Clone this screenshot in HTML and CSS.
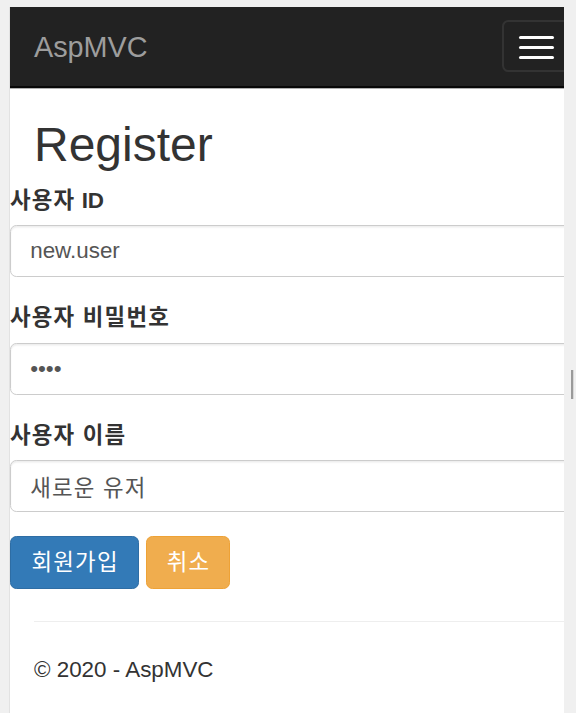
FILE: index.html
```html
<!DOCTYPE html>
<html lang="ko">
<head>
<meta charset="utf-8">
<title>Register - AspMVC</title>
<link rel="stylesheet" href="styles.css">
</head>
<body>
<div class="frame">
  <div class="page">
    <nav class="navbar">
      <a class="brand">AspMVC</a>
      <button class="toggle" type="button" aria-label="Toggle navigation">
        <span class="bar"></span>
        <span class="bar"></span>
        <span class="bar"></span>
      </button>
    </nav>
    <div class="container">
      <h2 class="title">Register</h2>
    </div>
    <form class="form">
      <div class="form-group">
        <label class="label" for="uid"><span class="ko">사용자</span> ID</label>
        <input class="form-control" id="uid" type="text" value="new.user">
      </div>
      <div class="form-group">
        <label class="label ko" for="upw">사용자 비밀번호</label>
        <input class="form-control" id="upw" type="password" value="1234">
      </div>
      <div class="form-group">
        <label class="label ko" for="uname">사용자 이름</label>
        <input class="form-control ko" id="uname" type="text" value="새로운 유저">
      </div>
      <div class="actions">
        <button class="btn btn-primary ko" type="button">회원가입</button>
        <button class="btn btn-warning ko" type="button">취소</button>
      </div>
    </form>
    <div class="container">
      <hr class="rule">
      <footer class="footer">
        <p class="copy">© 2020 - AspMVC</p>
      </footer>
    </div>
  </div>
</div>
<div class="side">
  <div class="grip"></div>
</div>
</body>
</html>
```
FILE: styles.css
```css
* { box-sizing: border-box; }

html, body {
  margin: 0;
  height: 713px;
  overflow: hidden;
}

body {
  background: #f0f0f0;
  display: flex;
  font-family: "Liberation Sans", "Noto Sans CJK KR", Arial, sans-serif;
  font-size: 22.4px;
  line-height: 32px;
  color: #333;
}

.ko {
  letter-spacing: 1.2px;
}

.frame {
  margin: 7px 0 0 10px;
  width: 554px;
  height: 706px;
  background: #fff;
  overflow: hidden;
  box-shadow: -1px 0 0 #e2e2e2;
}

.page {
  width: 586px;
}

.navbar {
  height: 81px;
  background: #222;
  border-bottom: 2px solid #080808;
  box-shadow: 0 1px 0 #b0b0b0;
  display: flex;
  align-items: flex-start;
  padding: 0 24px;
}

.brand {
  padding-top: 24px;
  line-height: 32px;
  font-size: 28.8px;
  color: #9d9d9d;
  text-decoration: none;
}

.toggle {
  margin-left: auto;
  margin-top: 13px;
  width: 70px;
  height: 52px;
  border: 2px solid #333;
  border-radius: 6.4px;
  background: transparent;
  padding: 14px 0 0 15px;
  display: flex;
  flex-direction: column;
  gap: 7px;
}

.bar {
  display: block;
  width: 35px;
  height: 3px;
  background: #fff;
  border-radius: 1.5px;
}

.container {
  padding: 0 24px;
}

.title {
  margin: 30px 0 12.5px;
  font-size: 48px;
  line-height: 53px;
  font-weight: 500;
  color: #333;
}

.form {
  margin: 0;
}

.form-group {
  margin-bottom: 24px;
}

.label {
  display: block;
  font-weight: 700;
  line-height: 33.5px;
  margin-bottom: 8px;
}

.form-control {
  display: block;
  width: 100%;
  height: 52px;
  padding: 0 19.2px;
  font-family: "Liberation Sans", "Noto Sans CJK KR", Arial, sans-serif;
  font-size: 22.4px;
  color: #555;
  background: #fff;
  border: 1.6px solid #ccc;
  border-radius: 6.4px;
  box-shadow: inset 0 1.6px 1.6px rgba(0, 0, 0, 0.075);
  outline: none;
}

.actions {
  display: flex;
  gap: 7px;
}

.btn {
  height: 53px;
  font-family: "Liberation Sans", "Noto Sans CJK KR", Arial, sans-serif;
  font-size: 22.4px;
  line-height: 50px;
  color: #fff;
  border: 1.5px solid transparent;
  border-radius: 6.4px;
}

.btn-primary {
  padding: 0 19.5px 0 20.5px;
  background: #337ab7;
  border-color: #2e6da4;
}

.btn-warning {
  padding: 0 18.5px 0 19.5px;
  background: #f0ad4e;
  border-color: #eea236;
}

.rule {
  margin: 32px 0;
  border: 0;
  border-top: 1.6px solid #eee;
  height: 0;
}

.copy {
  margin: 0;
  line-height: 32px;
}

.side {
  width: 12px;
  padding: 370px 0 0 7px;
}

.grip {
  width: 2px;
  height: 29px;
  background: #9a9a9a;
  box-shadow: 1px 0 0 #d8d8d8;
}
```
